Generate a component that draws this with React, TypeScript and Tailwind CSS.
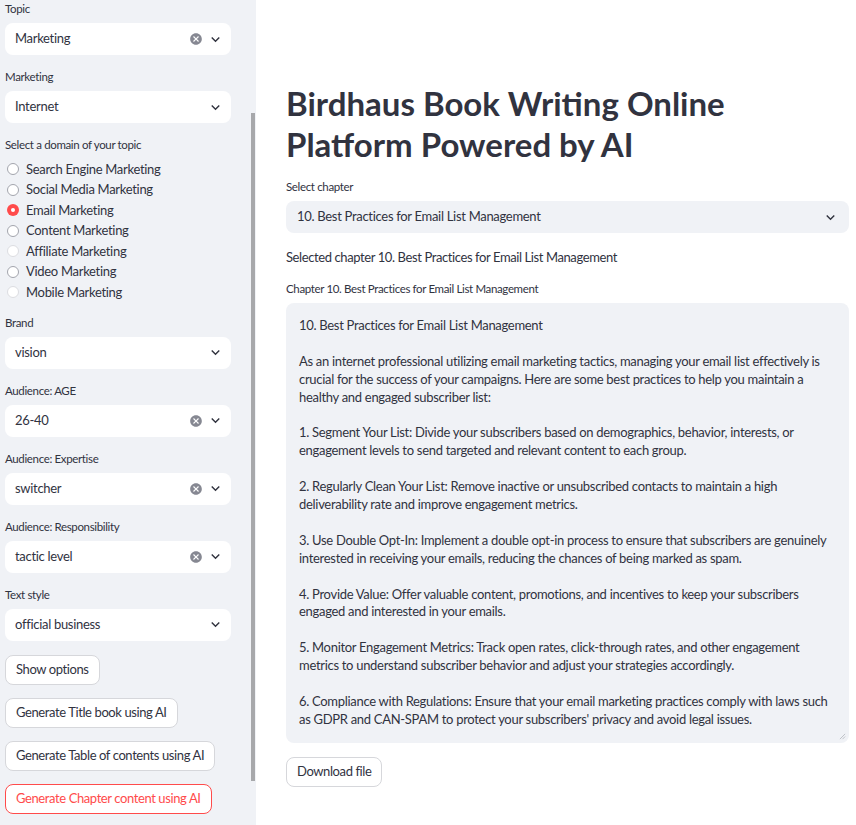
import React from 'react';

const Chevron = () => (
  <svg viewBox="0 0 24 24" className="w-[17px] h-[17px] fill-[#31333f] shrink-0">
    <path d="M7.41 8.59L12 13.17l4.59-4.58L18 10l-6 6-6-6 1.41-1.41z" />
  </svg>
);

const Clear = () => (
  <svg viewBox="0 0 24 24" className="w-[14px] h-[14px] fill-[#868892] shrink-0">
    <path d="M12 2C6.47 2 2 6.47 2 12s4.47 10 10 10 10-4.47 10-10S17.53 2 12 2zm5 13.59L15.59 17 12 13.41 8.41 17 7 15.59 10.59 12 7 8.41 8.41 7 12 10.59 15.59 7 17 8.41 13.41 12 17 15.59z" />
  </svg>
);

function Label({ children }: { children: React.ReactNode }) {
  return <div className="h-[22px] text-[11.5px] leading-[16px] tracking-[-0.35px] text-[#31333f]">{children}</div>;
}

function SideSelect({ label, value, clearable }: { label: string; value: string; clearable?: boolean }) {
  return (
    <div>
      <Label>{label}</Label>
      <div className="h-[32px] w-[226px] rounded-lg bg-white flex items-center pl-[10px] pr-[7px]">
        <span className="flex-1 text-[13px] text-[#31333f]">{value}</span>
        {clearable && <Clear />}
        <span className="ml-[4px] flex"><Chevron /></span>
      </div>
    </div>
  );
}

const domains = [
  { name: 'Search Engine Marketing' },
  { name: 'Social Media Marketing' },
  { name: 'Email Marketing', on: true },
  { name: 'Content Marketing' },
  { name: 'Affiliate Marketing', faint: true },
  { name: 'Video Marketing' },
  { name: 'Mobile Marketing', faint: true },
];

function Radio({ name, on, faint }: { name: string; on?: boolean; faint?: boolean }) {
  return (
    <div className="h-[20.5px] flex items-center gap-[7px] pl-[2px]">
      {on ? (
        <span className="w-[12px] h-[12px] rounded-full bg-[#ff4b4b] flex items-center justify-center">
          <span className="w-[4px] h-[4px] rounded-full bg-white" />
        </span>
      ) : (
        <span className={`w-[12px] h-[12px] rounded-full border bg-white ${faint ? 'border-[#dcdde1]' : 'border-[#a3a5ad]'}`} />
      )}
      <span className="text-[13px] text-[#31333f]">{name}</span>
    </div>
  );
}

function Btn({ children, danger }: { children: React.ReactNode; danger?: boolean }) {
  return (
    <div
      className={`h-[30px] self-start px-[10px] flex items-center rounded-lg border bg-white text-[13px] tracking-[-0.4px] ${
        danger ? 'border-[#ff4b4b] text-[#ff4b4b]' : 'border-[#d6d7db] text-[#31333f]'
      }`}
    >
      {children}
    </div>
  );
}

const body: string[][] = [
  ['10. Best Practices for Email List Management'],
  [
    'As an internet professional utilizing email marketing tactics, managing your email list effectively is',
    'crucial for the success of your campaigns. Here are some best practices to help you maintain a',
    'healthy and engaged subscriber list:',
  ],
  [
    '1. Segment Your List: Divide your subscribers based on demographics, behavior, interests, or',
    'engagement levels to send targeted and relevant content to each group.',
  ],
  [
    '2. Regularly Clean Your List: Remove inactive or unsubscribed contacts to maintain a high',
    'deliverability rate and improve engagement metrics.',
  ],
  [
    '3. Use Double Opt-In: Implement a double opt-in process to ensure that subscribers are genuinely',
    'interested in receiving your emails, reducing the chances of being marked as spam.',
  ],
  [
    '4. Provide Value: Offer valuable content, promotions, and incentives to keep your subscribers',
    'engaged and interested in your emails.',
  ],
  [
    '5. Monitor Engagement Metrics: Track open rates, click-through rates, and other engagement',
    'metrics to understand subscriber behavior and adjust your strategies accordingly.',
  ],
  [
    '6. Compliance with Regulations: Ensure that your email marketing practices comply with laws such',
    "as GDPR and CAN-SPAM to protect your subscribers' privacy and avoid legal issues.",
  ],
];

export default function App() {
  return (
    <div className="flex h-[825px] overflow-hidden bg-white font-[Lato,sans-serif] tracking-[-0.3px] text-[#31333f]">
      <aside className="w-[256px] shrink-0 bg-[#f0f2f6] flex">
        <div className="flex-1 flex flex-col gap-[14px] pl-[5px] pt-[1px]">
          <SideSelect label="Topic" value="Marketing" clearable />
          <SideSelect label="Marketing" value="Internet" />
          <div className="mb-[-2px]">
            <Label>Select a domain of your topic</Label>
            {domains.map((d) => (
              <Radio key={d.name} {...d} />
            ))}
          </div>
          <SideSelect label="Brand" value="vision" />
          <SideSelect label="Audience: AGE" value="26-40" clearable />
          <SideSelect label="Audience: Expertise" value="switcher" clearable />
          <SideSelect label="Audience: Responsibility" value="tactic level" clearable />
          <SideSelect label="Text style" value="official business" />
          <div className="flex flex-col gap-[13px]">
            <Btn>Show options</Btn>
            <Btn>Generate Title book using AI</Btn>
            <Btn>Generate Table of contents using AI</Btn>
            <Btn danger>Generate Chapter content using AI</Btn>
          </div>
        </div>
        <div className="w-[5px] pt-[113px]">
          <div className="w-[4px] h-[668px] bg-[#a7a8ab]" />
        </div>
      </aside>

      <main className="flex-1 pl-[30px] pr-[7px] pt-[83px] flex flex-col gap-[14px]">
        <h1 className="text-[33px] leading-[41px] font-bold tracking-normal text-[#31333f]">
          Birdhaus Book Writing Online
          <br />
          Platform Powered by AI
        </h1>

        <div>
          <Label>Select chapter</Label>
          <div className="h-[32px] rounded-lg bg-[#f0f2f6] flex items-center pl-[11px] pr-[10px]">
            <span className="flex-1 text-[13px]">10. Best Practices for Email List Management</span>
            <Chevron />
          </div>
        </div>

        <div className="h-[20px] leading-[20px] text-[13px] tracking-[-0.4px]">
          Selected chapter 10. Best Practices for Email List Management
        </div>

        <div>
          <Label>Chapter 10. Best Practices for Email List Management</Label>
          <div className="relative h-[440px] rounded-lg bg-[#f0f2f6] pl-[13px] pt-[14px] text-[13px] leading-[17.9px]">
            {body.map((para, i) => (
              <div key={i} className={i > 0 ? 'mt-[17.9px]' : ''}>
                {para.map((line) => (
                  <div key={line} className="whitespace-nowrap">
                    {line}
                  </div>
                ))}
              </div>
            ))}
            <svg viewBox="0 0 8 8" className="absolute right-[3px] bottom-[3px] w-[7px] h-[7px] stroke-[#b9bbc2]">
              <path d="M7 1L1 7M7 4L4 7" strokeWidth="1" />
            </svg>
          </div>
        </div>

        <Btn>Download file</Btn>
      </main>
    </div>
  );
}
